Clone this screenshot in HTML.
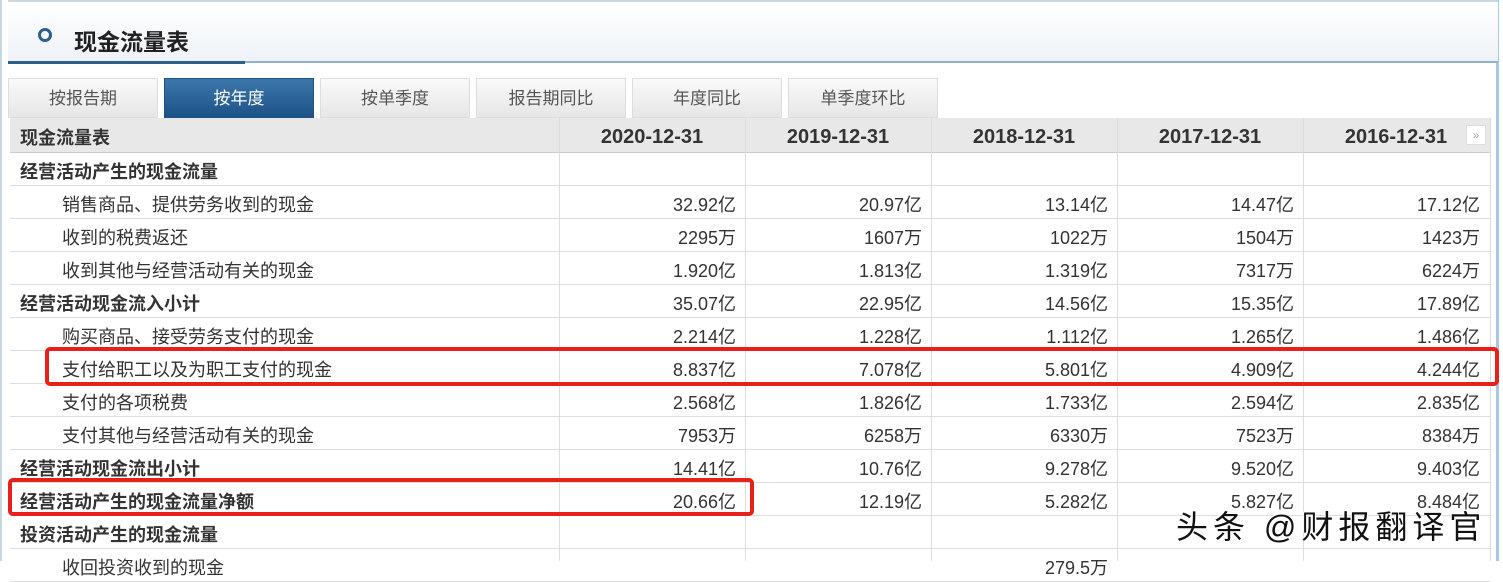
<!DOCTYPE html><html><head><meta charset="utf-8"><style>
body{margin:0;width:1503px;height:561px;overflow:hidden;background:#fff;font-family:"Liberation Sans","Noto Sans CJK SC",sans-serif;position:relative}
.hdr{position:absolute;left:8px;top:0;width:1490px;height:60px;background:linear-gradient(#fff,#eef2f6);border-top:2px solid #c8d6e2}
.hdr .ln{position:absolute;left:0;top:59px;width:1490px;height:2px;background:#8fb4d0}
.hdr .ln2{position:absolute;left:0;top:59px;width:237px;height:3px;background:#2c5f8c}
.circ{position:absolute;left:30px;top:26px;width:8px;height:8px;border:3px solid #2c5f8c;border-radius:50%}
.ttl{position:absolute;left:66px;top:21px;font-size:23px;font-weight:bold;color:#222}
.vl{position:absolute;left:0;top:0;width:2px;height:561px;background:#c8d6e2}
.vr{position:absolute;left:1496px;top:0;width:3px;height:561px;background:#a9c6de}
.tab{position:absolute;top:78px;height:40px;width:150px;background:linear-gradient(#fafafa,#e6e6e6);border:1px solid #ddd;box-sizing:border-box;text-align:center;line-height:40px;font-size:17px;color:#555}
.tab.on{background:linear-gradient(#3d78ab,#1d5287);color:#fff;border-color:#1d5287}
.th{position:absolute;left:10px;top:118px;width:1480px;height:34px;background:#e8e8e8;border-bottom:1px solid #ccc}
.c{position:absolute;font-size:18px;color:#333;white-space:nowrap}
.b{font-weight:bold}
.hl{position:absolute;left:10px;width:1480px;height:1px;background:#ddd}
.vv{position:absolute;top:118px;width:1px;height:443px;background:#ddd}
.num{text-align:right;width:170px}
.dt{text-align:center;width:186px}
.red{position:absolute;border:4px solid #e8201a;border-radius:5px;box-sizing:border-box}
</style></head><body>
<div class="vl"></div><div class="vr"></div>
<div class="hdr"><div class="circ"></div><div class="ttl">现金流量表</div><div class="ln"></div><div class="ln2"></div></div>
<div class="tab" style="left:8px">按报告期</div>
<div class="tab on" style="left:164px">按年度</div>
<div class="tab" style="left:320px">按单季度</div>
<div class="tab" style="left:476px">报告期同比</div>
<div class="tab" style="left:632px">年度同比</div>
<div class="tab" style="left:788px">单季度环比</div>
<div class="th"></div>
<div id="g"></div>
<div class="c" style="left:1176px;top:502px;font-size:32px;letter-spacing:5px;color:#111;text-shadow:1px 1px 1px #fff,-1px -1px 1px #fff">头条 @财报翻译官</div>
<div class="red" style="left:45px;top:347px;width:1454px;height:39px"></div>
<div class="red" style="left:8px;top:478px;width:746px;height:38px"></div>
<div style="position:absolute;left:1466px;top:125px;width:20px;height:20px;background:#fff;border:1px solid #ddd;box-sizing:border-box;color:#aaa;font-size:12px;text-align:center;line-height:18px">»</div>
<script>
var rows=[["经营活动产生的现金流量",1,[]],["销售商品、提供劳务收到的现金",0,["32.92亿","20.97亿","13.14亿","14.47亿","17.12亿"]],["收到的税费返还",0,["2295万","1607万","1022万","1504万","1423万"]],["收到其他与经营活动有关的现金",0,["1.920亿","1.813亿","1.319亿","7317万","6224万"]],["经营活动现金流入小计",1,["35.07亿","22.95亿","14.56亿","15.35亿","17.89亿"]],["购买商品、接受劳务支付的现金",0,["2.214亿","1.228亿","1.112亿","1.265亿","1.486亿"]],["支付给职工以及为职工支付的现金",0,["8.837亿","7.078亿","5.801亿","4.909亿","4.244亿"]],["支付的各项税费",0,["2.568亿","1.826亿","1.733亿","2.594亿","2.835亿"]],["支付其他与经营活动有关的现金",0,["7953万","6258万","6330万","7523万","8384万"]],["经营活动现金流出小计",1,["14.41亿","10.76亿","9.278亿","9.520亿","9.403亿"]],["经营活动产生的现金流量净额",1,["20.66亿","12.19亿","5.282亿","5.827亿","8.484亿"]],["投资活动产生的现金流量",1,[]],["收回投资收到的现金",0,["","","279.5万","",""]]];
var xs=[559,745,931,1117,1303],h='';
h+='<div class="c b" style="left:20px;top:124px">现金流量表</div>';
var ds=["2020-12-31","2019-12-31","2018-12-31","2017-12-31","2016-12-31"];
xs.forEach(function(x,i){h+='<div class="vv" style="left:'+x+'px"></div><div class="c b dt" style="left:'+x+'px;top:126px;font-size:20px">'+ds[i]+'</div>';});
rows.forEach(function(r,k){var t=152+33*k;h+='<div class="hl" style="top:'+(t+33)+'px"></div>';h+='<div class="c'+(r[1]?' b':'')+'" style="left:'+(r[1]?20:62)+'px;top:'+(t+6)+'px">'+r[0]+'</div>';r[2].forEach(function(v,i){h+='<div class="c num" style="left:'+(xs[i]+7)+'px;top:'+(t+6)+'px">'+v+'</div>';});});
h+='<div class="vv" style="left:1490px"></div>';
document.getElementById('g').innerHTML=h;
</script>
</body></html>
